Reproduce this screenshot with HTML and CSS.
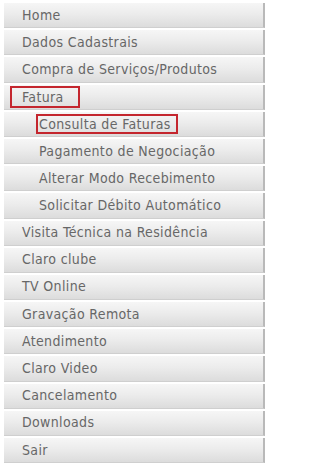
FILE: index.html
```html
<!DOCTYPE html>
<html lang="pt">
<head>
<meta charset="utf-8">
<link rel="stylesheet" href="styles.css">
</head>
<body>
<nav class="menu">
  <div class="item"><span class="label">Home</span></div>
  <div class="item"><span class="label">Dados Cadastrais</span></div>
  <div class="item"><span class="label">Compra de Serviços/Produtos</span></div>
  <div class="item"><span class="label boxed wide">Fatura</span></div>
  <div class="item sub"><span class="label boxed">Consulta de Faturas</span></div>
  <div class="item sub"><span class="label">Pagamento de Negociação</span></div>
  <div class="item sub"><span class="label">Alterar Modo Recebimento</span></div>
  <div class="item sub"><span class="label">Solicitar Débito Automático</span></div>
  <div class="item"><span class="label">Visita Técnica na Residência</span></div>
  <div class="item"><span class="label">Claro clube</span></div>
  <div class="item"><span class="label">TV Online</span></div>
  <div class="item"><span class="label">Gravação Remota</span></div>
  <div class="item"><span class="label">Atendimento</span></div>
  <div class="item"><span class="label">Claro Video</span></div>
  <div class="item"><span class="label">Cancelamento</span></div>
  <div class="item"><span class="label">Downloads</span></div>
  <div class="item"><span class="label">Sair</span></div>
</nav>
</body>
</html>
```
FILE: styles.css
```css
html, body {
  margin: 0;
  padding: 0;
  background: #ffffff;
}
.menu {
  width: 261px;
  margin: 3px 0 0 4px;
  display: flex;
  flex-direction: column;
  gap: 2px;
  font-family: "DejaVu Sans Condensed", "Liberation Sans", sans-serif;
}
.item {
  height: 25.2px;
  display: flex;
  align-items: center;
  padding-left: 18px;
  background: linear-gradient(to bottom, #f6f6f6 0%, #ececec 45%, #dcdcdc 100%);
  border-right: 2px solid #b9b9b9;
  border-bottom: 1px solid #cfcfcf;
  box-sizing: border-box;
}
.item.sub {
  padding-left: 35px;
}
.label {
  font-size: 14px;
  letter-spacing: 0.35px;
  color: #676767;
  line-height: 17px;
  padding: 0 3px 0 2px;
  margin-left: -4px;
  border: 2px solid transparent;
  white-space: nowrap;
}
.label.boxed {
  border-color: #c4262e;
  line-height: 16px;
  padding: 0 5px 0 1px;
  margin-left: -3px;
}
.label.boxed.wide {
  line-height: 18px;
  padding: 0 14px 0 10px;
  margin-left: -12px;
}
```
